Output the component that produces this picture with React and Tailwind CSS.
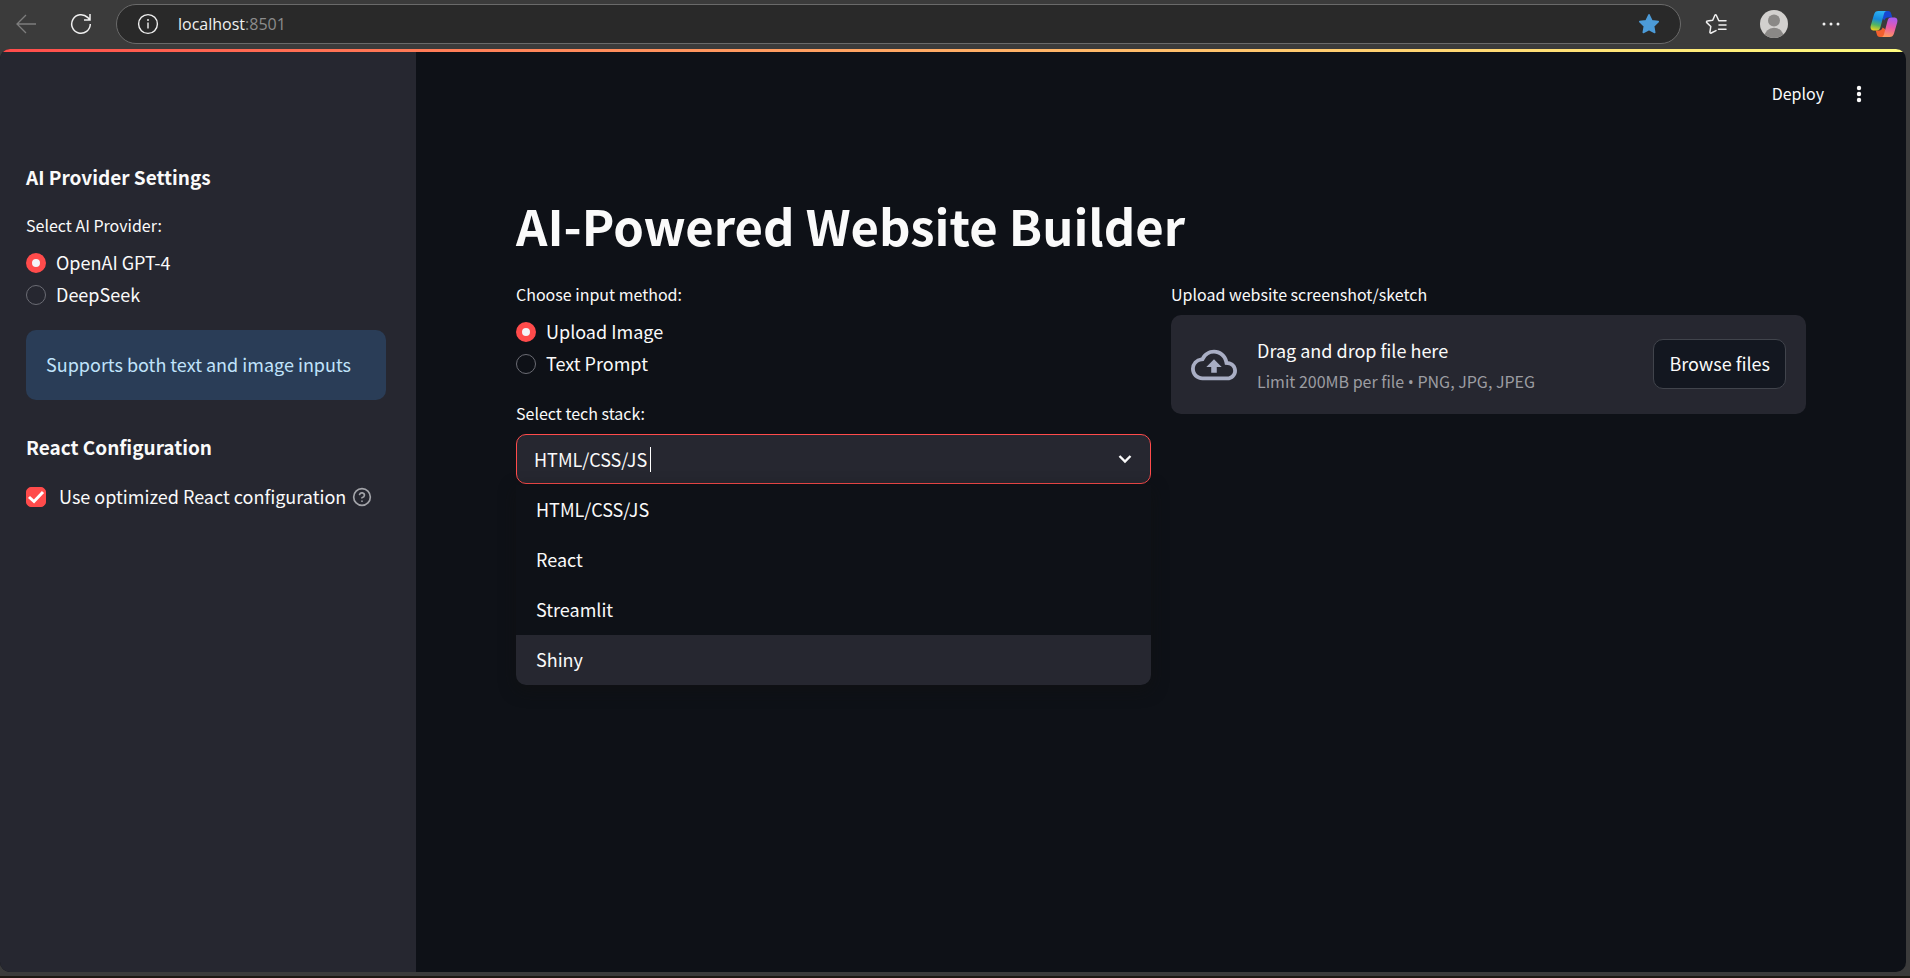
import { useState } from "react";

const STACKS = ["HTML/CSS/JS", "React", "Streamlit", "Shiny"];

function RadioGroup({ legend, name, options }) {
  const [value, setValue] = useState(options[0]);
  return (
    <fieldset>
      <legend className="text-[16px] leading-6">{legend}</legend>
      <div className="mt-[13px] flex flex-col items-start gap-[6px]">
        {options.map((o) => (
          <label key={o} className="flex items-center gap-[10px] text-[18px] leading-6">
            <input
              type="radio"
              name={name}
              checked={value === o}
              onChange={() => setValue(o)}
              className="size-5 appearance-none rounded-full border border-[#6b6c74] checked:border-[6px] checked:border-[#ff4b4b] checked:bg-[#f3f4f8]"
            />
            <span className="pb-[2px] block">{o}</span>
          </label>
        ))}
      </div>
    </fieldset>
  );
}

function BrowserBar() {
  return (
    <header className="flex h-[49px] shrink-0 items-center bg-[#3b3b3b] pb-px text-[#f0f0f0]">
      <button aria-label="Back" className="ml-4 text-[#7d7d7d]">
        <svg width="20" height="20" viewBox="0 0 20 20" fill="none" stroke="currentColor" strokeWidth="1.3">
          <path d="M10 1 1 10l9 9M1 10h19" />
        </svg>
      </button>
      <button aria-label="Refresh" className="ml-[34px]">
        <svg width="22" height="22" viewBox="0 0 22 22" fill="none" stroke="currentColor" strokeWidth="1.5">
          <path d="M20.3 11A9.3 9.3 0 1 1 17.6 4.4L20 6.8M20 1v6h-6" />
        </svg>
      </button>
      <div className="ml-6 flex h-10 flex-1 items-center rounded-full border border-[#6a6a6a] bg-[#292929] pr-5 pl-5">
        <svg width="22" height="22" viewBox="0 0 22 22" fill="none" stroke="currentColor" strokeWidth="1.4">
          <circle cx="11" cy="11" r="9.4" />
          <path d="M11 9.5v6M11 6v2" />
        </svg>
        <span className="ml-[19px] flex-1 font-['Open_Sans',sans-serif] text-[16px] leading-6">
          localhost<span className="text-[#8c8c8c]">:8501</span>
        </span>
        <button aria-label="Favourite">
          <svg width="22" height="22" viewBox="0 0 22 22" fill="#4c9bd8" stroke="#4c9bd8" strokeWidth="1.6" strokeLinejoin="round">
            <path d="m11 1.8 2.8 5.9 6.4.9-4.6 4.5 1.1 6.4-5.7-3-5.7 3 1.1-6.4L1.8 8.6l6.4-.9z" />
          </svg>
        </button>
      </div>
      <button aria-label="Favourites list" className="ml-6">
        <svg width="22" height="22" viewBox="0 0 22 22" fill="none" stroke="currentColor" strokeWidth="1.5" strokeLinejoin="round" strokeLinecap="round">
          <path d="M21 7.7h-7.200L11.300 2.200c-.3-.7-1.100-.7-1.400 0L7.700 7.300l-5.400.8c-.8.1-1.100 1-.5 1.500l4 3.900-.9 5.600c-.1.800.6 1.300 1.300.9L11 17.600M14 12h7M13.500 16.300H21" />
        </svg>
      </button>
      <button aria-label="Profile" className="ml-8">
        <svg width="30" height="30" viewBox="0 0 30 30">
          <clipPath id="avatar"><circle cx="15" cy="15" r="14" /></clipPath>
          <circle cx="15" cy="15" r="14" fill="#d2d0ce" />
          <circle cx="15" cy="11.500" r="6" fill="#8a8886" />
          <circle cx="15" cy="28.500" r="9.800" fill="#8a8886" clipPath="url(#avatar)" />
        </svg>
      </button>
      <button aria-label="Settings and more" className="ml-[33px]">
        <svg width="18" height="20" viewBox="0 0 18 20" fill="currentColor">
          <circle cx="2" cy="10" r="1.500" /><circle cx="9" cy="10" r="1.500" /><circle cx="16" cy="10" r="1.500" />
        </svg>
      </button>
      <button aria-label="Copilot" className="mr-3 ml-[30px]">
        <svg width="28" height="28" viewBox="0 0 28 28">
          <defs>
            <linearGradient id="cpA" x1="0.4" y1="0" x2="0.2" y2="1">
              <stop offset="0" stopColor="#2bb0f4" /><stop offset=".4" stopColor="#1689dc" /><stop offset=".7" stopColor="#52b562" /><stop offset="1" stopColor="#f4d31b" />
            </linearGradient>
            <linearGradient id="cpB" x1="0.6" y1="0" x2="0.4" y2="1">
              <stop offset="0" stopColor="#a95bf0" /><stop offset=".5" stopColor="#ea5aa8" /><stop offset="1" stopColor="#ff9a5c" />
            </linearGradient>
          </defs>
          <path d="M13 1h5c2 0 2.800 1 3.300 3l1 3.500H18c-2 0-3 1-3.600 3L13 9z" fill="#1747d1" />
          <path d="M15 27h-5c-2 0-2.800-1-3.300-3l-1-3.500H9c2 0 3-1 3.600-3L15 19z" fill="#f2602e" />
          <path d="M8.500 1H17c-2 0-2.700 1.500-3.200 3.500L10.500 17c-.6 2.400-1.700 3.500-3.800 3.500H4c-3 0-4-2.300-3.200-5L4 4.500C4.800 2 6 1 8.500 1z" fill="url(#cpA)" />
          <path d="M19.500 27H11c2 0 2.700-1.500 3.200-3.500L17.500 11c.6-2.400 1.700-3.500 3.800-3.500H24c3 0 4 2.300 3.200 5L24 23.500c-.8 2.500-2 3.500-4.500 3.500z" fill="url(#cpB)" />
        </svg>
      </button>
    </header>
  );
}

function Sidebar() {
  return (
    <aside className="w-[416px] shrink-0 bg-[#262730] px-[26px] pt-[109px]">
      <h3 className="text-[19px] leading-8 font-semibold">AI Provider Settings</h3>
      <div className="mt-5">
        <RadioGroup legend="Select AI Provider:" name="provider" options={["OpenAI GPT-4", "DeepSeek"]} />
      </div>
      <p className="mt-[22px] mr-1 rounded-[10px] bg-[#2a3d57] px-5 pt-[19px] pb-[21px] text-[18px] leading-[30px] text-[#c0e3fb]">
        Supports both text and image inputs
      </p>
      <h3 className="mt-[31px] text-[19px] leading-8 font-semibold">React Configuration</h3>
      <div className="mt-[21px] flex items-center">
        <label className="flex items-center gap-[13px] text-[18px] leading-6 whitespace-nowrap">
          <span className="relative flex size-5">
            <input type="checkbox" defaultChecked className="size-5 appearance-none rounded-[5px] border border-[#6b6c74] checked:border-[#ff4b4b] checked:bg-[#ff4b4b]" />
            <svg className="pointer-events-none absolute inset-0" width="20" height="20" viewBox="0 0 20 20" fill="none" stroke="#fff" strokeWidth="3">
              <path d="m3 10 5 4.500L17 5" />
            </svg>
          </span>
          <span className="block pb-[2px]">Use optimized React configuration</span>
        </label>
        <button aria-label="Help" className="ml-[6px] text-[#a3a4a9]">
          <svg width="20" height="20" viewBox="0 0 24 24" fill="none" stroke="currentColor" strokeWidth="2" strokeLinecap="round" strokeLinejoin="round">
            <circle cx="12" cy="12" r="10" />
            <path d="M9.090 9a3 3 0 0 1 5.830 1c0 2-3 3-3 3M12 17h.01" />
          </svg>
        </button>
      </div>
    </aside>
  );
}

function StackSelect() {
  const [value, setValue] = useState(STACKS[0]);
  return (
    <div className="mt-6">
      <label htmlFor="stack" className="block text-[16px] leading-6">Select tech stack:</label>
      <div className="relative mt-[9px]">
        <div className="flex h-[50px] items-center rounded-[10px] border border-[#ff4b4b] bg-[#262730] pr-4 pl-[17px]">
          <input
            id="stack"
            role="combobox"
            aria-expanded="true"
            aria-controls="stack-list"
            value={value}
            onChange={(e) => setValue(e.target.value)}
            className="field-sizing-content bg-transparent text-[18px] leading-6 caret-transparent outline-none"
          />
          <span className="ml-[3px] h-[25px] w-px bg-white" />
          <svg className="ml-auto" width="18" height="18" viewBox="0 0 18 18" fill="none" stroke="#fafafa" strokeWidth="2.400">
            <path d="M3.500 6 9 11.500 14.500 6" />
          </svg>
        </div>
        <ul
          id="stack-list"
          role="listbox"
          className="absolute inset-x-0 top-full mt-px overflow-hidden rounded-b-[10px] bg-[#0e1117] shadow-[0_5px_16px_rgba(16,16,16,0.6)]"
        >
          {STACKS.map((s) => (
            <li
              key={s}
              role="option"
              aria-selected={s === value}
              onClick={() => setValue(s)}
              className="flex h-[50px] items-center px-5 pb-[2px] text-[18px] leading-6 last:bg-[#262730]"
            >
              {s}
            </li>
          ))}
        </ul>
      </div>
    </div>
  );
}

function Uploader() {
  return (
    <section>
      <h2 className="text-[16px] leading-6">Upload website screenshot/sketch</h2>
      <div className="mt-[9px] flex h-[99px] items-center rounded-[10px] bg-[#262730] px-5">
        <svg width="46" height="46" viewBox="0 0 24 24" fill="#a9aec4">
          <path d="M19.350 10.040A7.490 7.490 0 0 0 12 4C9.110 4 6.600 5.640 5.350 8.040A5.994 5.994 0 0 0 0 14c0 3.310 2.690 6 6 6h13c2.760 0 5-2.240 5-5 0-2.640-2.050-4.780-4.650-4.960zM19 18H6c-2.210 0-4-1.790-4-4 0-2.050 1.530-3.760 3.560-3.970l1.070-.11.5-.95A5.469 5.469 0 0 1 12 6c2.620 0 4.880 1.860 5.390 4.430l.3 1.500 1.530.11A2.980 2.980 0 0 1 22 15c0 1.650-1.350 3-3 3zM8 13h2.550v3h2.900v-3H16l-4-4z" />
        </svg>
        <div className="ml-5 flex-1">
          <p className="text-[18px] leading-8">Drag and drop file here</p>
          <p className="text-[16px] leading-[30px] text-[#9c9da2]">
            Limit 200MB per file <span className="font-['Open_Sans',sans-serif] leading-none">•</span> PNG, JPG, JPEG
          </p>
        </div>
        <button className="mb-px h-[50px] rounded-[10px] border border-[#41444c] bg-[#131720] px-[15px] pb-[2px] text-[18px] leading-6">
          Browse files
        </button>
      </div>
    </section>
  );
}

export default function App() {
  return (
    <div className="flex min-h-screen flex-col bg-[#3b3b3b] font-['Noto_Sans_CJK_SC',sans-serif] text-[#fafafa]">
      <BrowserBar />
      <div className="mr-1 flex flex-1 flex-col overflow-hidden rounded-[10px] bg-[#0e1117]">
        <div className="h-[3px] bg-linear-to-r from-[#ff4b4b] to-[#fffd80]" />
        <div className="flex flex-1">
          <Sidebar />
          <main className="min-w-0 flex-1">
            <div className="flex h-[84px] items-center justify-end pr-[37px]">
              <button className="pb-[2px] text-[16px] leading-6">Deploy</button>
              <button aria-label="Menu" className="ml-[25px]">
                <svg width="20" height="20" viewBox="0 0 20 20" fill="#fafafa">
                  <circle cx="10" cy="4" r="2.200" /><circle cx="10" cy="10" r="2.200" /><circle cx="10" cy="16" r="2.200" />
                </svg>
              </button>
            </div>
            <div className="px-[100px] pt-14">
              <h1 className="text-[49px] leading-[66px] font-bold">AI-Powered Website Builder</h1>
              <div className="mt-6 grid grid-cols-2 gap-5">
                <div>
                  <RadioGroup legend="Choose input method:" name="method" options={["Upload Image", "Text Prompt"]} />
                  <StackSelect />
                </div>
                <Uploader />
              </div>
            </div>
          </main>
        </div>
      </div>
      <footer className="h-[6px] shrink-0 border-b-2 border-[#1c1712] bg-[#3b3b3b]" />
    </div>
  );
}
